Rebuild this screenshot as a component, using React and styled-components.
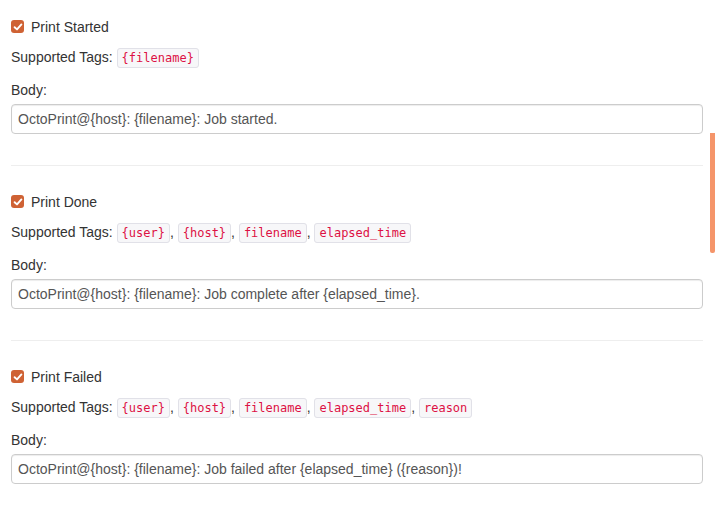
import React from "react";
import styled, { createGlobalStyle } from "styled-components";

const Global = createGlobalStyle`
  html, body { margin: 0; padding: 0; background: #fff; }
  body {
    font-family: "Liberation Sans", Arial, sans-serif;
    font-size: 14px;
    line-height: 20px;
    color: #333;
  }
`;

const Page = styled.div`
  padding: 17px 18px 0 11px;
`;

const Section = styled.section`
  display: flex;
  flex-direction: column;
`;

const Divider = styled.hr`
  margin: 31px 0 26px;
  border: 0;
  border-top: 1px solid #eee;
  height: 0;
`;

const CheckLabel = styled.label`
  display: flex;
  align-items: center;
  gap: 7px;
  height: 20px;
  margin-bottom: 10px;
  cursor: pointer;
`;

const Box = styled.span`
  width: 13px;
  height: 13px;
  border-radius: 3px;
  background: #cf6234;
  display: inline-flex;
  align-items: center;
  justify-content: center;
  margin-top: -1px;
`;

const Tags = styled.div`
  line-height: 20px;
  margin-bottom: 13px;
`;

const Code = styled.code`
  font-family: "DejaVu Sans Mono", "Liberation Mono", monospace;
  font-size: 12px;
  line-height: 14px;
  color: #dd1144;
  background: #f7f7f9;
  border: 1px solid #e1e1e8;
  border-radius: 3px;
  padding: 2px 4px;
  white-space: nowrap;
`;

const FieldLabel = styled.label`
  display: block;
  margin-bottom: 4px;
`;

const Input = styled.input`
  box-sizing: border-box;
  width: 100%;
  height: 30px;
  padding: 4px 6px;
  border: 1px solid #ccc;
  border-radius: 4px;
  font-family: "Liberation Sans", Arial, sans-serif;
  font-size: 14px;
  color: #555;
  background: #fff;
  box-shadow: inset 0 1px 1px rgba(0, 0, 0, 0.075);
  outline: none;
`;

const Scroll = styled.div`
  position: fixed;
  left: 710px;
  top: 133px;
  width: 5px;
  height: 120px;
  background: #f5956a;
  border-radius: 0 0 2px 2px;
`;

const Check = () => (
  <Box>
    <svg width="10" height="10" viewBox="0 0 10 10">
      <path d="M1.6 5.2 L4 7.4 L8.4 2.4" fill="none" stroke="#fff" strokeWidth="1.9" strokeLinecap="round" strokeLinejoin="round" />
    </svg>
  </Box>
);

const sections = [
  { title: "Print Started", tags: ["{filename}"], body: "OctoPrint@{host}: {filename}: Job started." },
  { title: "Print Done", tags: ["{user}", "{host}", "filename", "elapsed_time"], body: "OctoPrint@{host}: {filename}: Job complete after {elapsed_time}." },
  { title: "Print Failed", tags: ["{user}", "{host}", "filename", "elapsed_time", "reason"], body: "OctoPrint@{host}: {filename}: Job failed after {elapsed_time} ({reason})!" },
];

export default function App() {
  return (
    <>
      <Global />
      <Page>
        {sections.map((s, i) => (
          <React.Fragment key={s.title}>
            {i > 0 && <Divider />}
            <Section>
              <CheckLabel>
                <Check />
                {s.title}
              </CheckLabel>
              <Tags>
                Supported Tags:{" "}
                {s.tags.map((t, j) => (
                  <React.Fragment key={t}>
                    {j > 0 && ", "}
                    <Code>{t}</Code>
                  </React.Fragment>
                ))}
              </Tags>
              <FieldLabel>Body:</FieldLabel>
              <Input defaultValue={s.body} />
            </Section>
          </React.Fragment>
        ))}
      </Page>
      <Scroll />
    </>
  );
}
